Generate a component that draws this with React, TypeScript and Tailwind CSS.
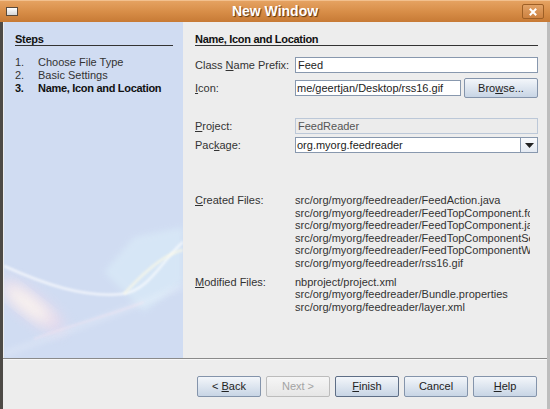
import type { ReactNode } from 'react'

const font = "font-['Liberation_Sans',Arial,sans-serif]"

const Mn = ({ children }: { children: ReactNode }) => <span className="underline underline-offset-[1px]">{children}</span>

const Label = ({ children }: { children: ReactNode }) => (
  <div className="w-[100px] shrink-0 text-[11px] leading-[13px] text-[#333]">{children}</div>
)

const Button = ({ children, disabled, primary }: { children: ReactNode; disabled?: boolean; primary?: boolean }) => (
  <div
    className={`flex h-[21px] w-[64px] items-center justify-center whitespace-pre rounded-[2px] border text-[11px] ${
      disabled
        ? 'border-[#bcbcbc] bg-gradient-to-b from-[#f6f6f6] to-[#e6e6e6] text-[#a3a3a3]'
        : primary
          ? 'border-[#5e6e86] bg-gradient-to-b from-[#f3f6fa] to-[#c8d5e5] text-[#222]'
          : 'border-[#8494ab] bg-gradient-to-b from-[#f3f6fa] to-[#c8d5e5] text-[#222]'
    }`}
  >
    {children}
  </div>
)

const created = [
  'src/org/myorg/feedreader/FeedAction.java',
  'src/org/myorg/feedreader/FeedTopComponent.form',
  'src/org/myorg/feedreader/FeedTopComponent.java',
  'src/org/myorg/feedreader/FeedTopComponentSettings.xml',
  'src/org/myorg/feedreader/FeedTopComponentWstcref.xml',
  'src/org/myorg/feedreader/rss16.gif',
]

const modified = [
  'nbproject/project.xml',
  'src/org/myorg/feedreader/Bundle.properties',
  'src/org/myorg/feedreader/layer.xml',
]

const Swirl = () => (
  <svg className="pointer-events-none absolute inset-0" width="179" height="336" viewBox="0 0 179 336">
    <defs>
      <filter id="b1" x="-50%" y="-50%" width="200%" height="200%">
        <feGaussianBlur stdDeviation="1" />
      </filter>
      <filter id="b6" x="-50%" y="-50%" width="200%" height="200%">
        <feGaussianBlur stdDeviation="7" />
      </filter>
      <filter id="b3" x="-50%" y="-50%" width="200%" height="200%">
        <feGaussianBlur stdDeviation="3" />
      </filter>
    </defs>
    <path d="M100 250 L130 215 L179 205 L179 260 L140 290 Z" fill="#dff3fb" opacity="0.45" filter="url(#b3)" />
    <ellipse cx="28" cy="284" rx="40" ry="12" transform="rotate(38 28 284)" fill="#f8d8e8" opacity="0.6" filter="url(#b6)" />
    <ellipse cx="24" cy="282" rx="28" ry="7" transform="rotate(38 24 282)" fill="#fffdf0" opacity="0.85" filter="url(#b6)" />
    <path d="M0 244 C40 262 80 276 118 272 C145 269 158 238 179 220" fill="none" stroke="#ffffff" strokeWidth="2.5" opacity="0.65" filter="url(#b1)" />
    <path d="M120 272 C140 250 160 232 179 228" fill="none" stroke="#fffbe6" strokeWidth="3" opacity="0.6" filter="url(#b1)" />
    <path d="M0 332 C50 314 110 294 179 264" fill="none" stroke="#ffffff" strokeWidth="3" opacity="0.35" filter="url(#b3)" />
    <path d="M30 317 C70 302 110 292 140 280" fill="none" stroke="#fbe6f0" strokeWidth="2" opacity="0.4" filter="url(#b1)" />
  </svg>
)

export default function App() {
  return (
    <div className={`${font} flex h-[409px] w-[550px] flex-col overflow-hidden bg-[#ededed]`}>
      {/* title bar */}
      <div className="relative flex h-[22px] shrink-0 items-center border-t border-[#f2c08e] bg-gradient-to-b from-[#e5a261] via-[#d88e48] to-[#c77a35] px-[6px]">
        <div className="h-[9px] w-[12px] border border-[#5a4a3a] bg-gradient-to-b from-[#ffffff] to-[#d6d6d6]" />
        <div className="flex-1 pl-[10px] text-center text-[14px] font-bold text-white [text-shadow:1px_1px_1px_#5a3510]">New Window</div>
        <div className="flex h-[15px] w-[22px] items-center justify-center rounded-[2px] border border-[#9e5f25] bg-gradient-to-b from-[#e2a266] to-[#cd8240]">
          <svg width="8" height="8" viewBox="0 0 8 8">
            <path d="M1.5 1.5 L6.5 6.5 M6.5 1.5 L1.5 6.5" stroke="#ffffff" strokeWidth="2" strokeLinecap="square" />
          </svg>
        </div>
      </div>

      <div className="flex flex-1 flex-col border-l-[3px] border-r-[3px] border-l-[#4d4a46] border-r-[#bdbdbd]">
        {/* content */}
        <div className="flex h-[336px] shrink-0">
          <div className="relative ml-px w-[179px] shrink-0 bg-[#d0dcf2] pl-[11px] pr-[10px]">
            <Swirl />
            <div className="relative">
              <div className="mt-[11px] h-[13px] border-b border-[#333] text-[11px] leading-[12px] font-bold tracking-[-0.3px] text-[#111]">Steps</div>
              <div className="mt-[10px] text-[11px] leading-[13px] text-[#333]">
                <div className="flex"><span className="w-[23px]">1.</span><span>Choose File Type</span></div>
                <div className="flex"><span className="w-[23px]">2.</span><span>Basic Settings</span></div>
                <div className="flex font-bold tracking-[-0.3px] text-[#111]"><span className="w-[23px]">3.</span><span>Name, Icon and Location</span></div>
              </div>
            </div>
          </div>

          <div className="flex min-w-0 flex-1 flex-col pl-[12px] pr-[9px]">
            <div className="mt-[11px] h-[13px] border-b border-[#333] text-[11px] leading-[12px] font-bold tracking-[-0.3px] text-[#111]">
              Name, Icon and Location
            </div>

            <div className="mt-[11px] flex h-[16px] items-center">
              <Label>Class <Mn>N</Mn>ame Prefix:</Label>
              <div className="flex h-[16px] flex-1 items-center border border-[#8898ae] bg-white pl-[2px] text-[11px] text-[#222]">Feed</div>
            </div>

            <div className="mt-[5px] flex h-[20px] items-center">
              <Label><Mn>I</Mn>con:</Label>
              <div className="flex h-[16px] w-[166px] items-center overflow-hidden whitespace-nowrap border border-[#8898ae] bg-white pl-[1px] text-[11px] text-[#222]">
                me/geertjan/Desktop/rss16.gif
              </div>
              <div className="ml-[3px] flex h-[20px] flex-1 items-center justify-center rounded-[2px] border border-[#8494ab] bg-gradient-to-b from-[#f3f6fa] to-[#c8d5e5] text-[11px] text-[#222]">
                Bro<Mn>w</Mn>se...
              </div>
            </div>

            <div className="mt-[20px] flex h-[16px] items-center">
              <Label><Mn>P</Mn>roject:</Label>
              <div className="flex h-[16px] flex-1 items-center border border-[#bcc8d8] bg-[#ececec] pl-[2px] text-[11px] text-[#555]">FeedReader</div>
            </div>

            <div className="mt-[3px] flex h-[16px] items-center">
              <Label>Pac<Mn>k</Mn>age:</Label>
              <div className="flex h-[16px] flex-1 border border-[#8898ae] bg-white">
                <div className="flex flex-1 items-center pl-[1px] text-[11px] text-[#222]">org.myorg.feedreader</div>
                <div className="flex w-[17px] items-center justify-center border-l border-[#8898ae] bg-gradient-to-b from-[#fafbfd] to-[#e4eaf2]">
                  <svg width="9" height="5" viewBox="0 0 9 5"><path d="M0 0 H9 L4.5 5 Z" fill="#222" /></svg>
                </div>
              </div>
            </div>

            <div className="mt-[41px] flex items-start">
              <Label><Mn>C</Mn>reated Files:</Label>
              <div className="w-[235px] overflow-hidden whitespace-nowrap text-[11px] leading-[12.6px] text-[#333]">
                {created.map((f) => (
                  <div key={f}>{f}</div>
                ))}
              </div>
            </div>

            <div className="mt-[6px] flex items-start">
              <Label><Mn>M</Mn>odified Files:</Label>
              <div className="w-[235px] overflow-hidden whitespace-nowrap text-[11px] leading-[12.6px] text-[#333]">
                {modified.map((f) => (
                  <div key={f}>{f}</div>
                ))}
              </div>
            </div>
          </div>
        </div>

        {/* separator + buttons */}
        <div className="h-px bg-[#8a8a8a]" />
        <div className="h-px bg-[#f7f7f7]" />
        <div className="flex justify-end gap-[5px] pr-[10px] pt-[16px]">
          <Button>{'< '}<Mn>B</Mn>ack</Button>
          <Button disabled>Next &gt;</Button>
          <Button primary><Mn>F</Mn>inish</Button>
          <Button>Cancel</Button>
          <Button><Mn>H</Mn>elp</Button>
        </div>
      </div>
    </div>
  )
}
